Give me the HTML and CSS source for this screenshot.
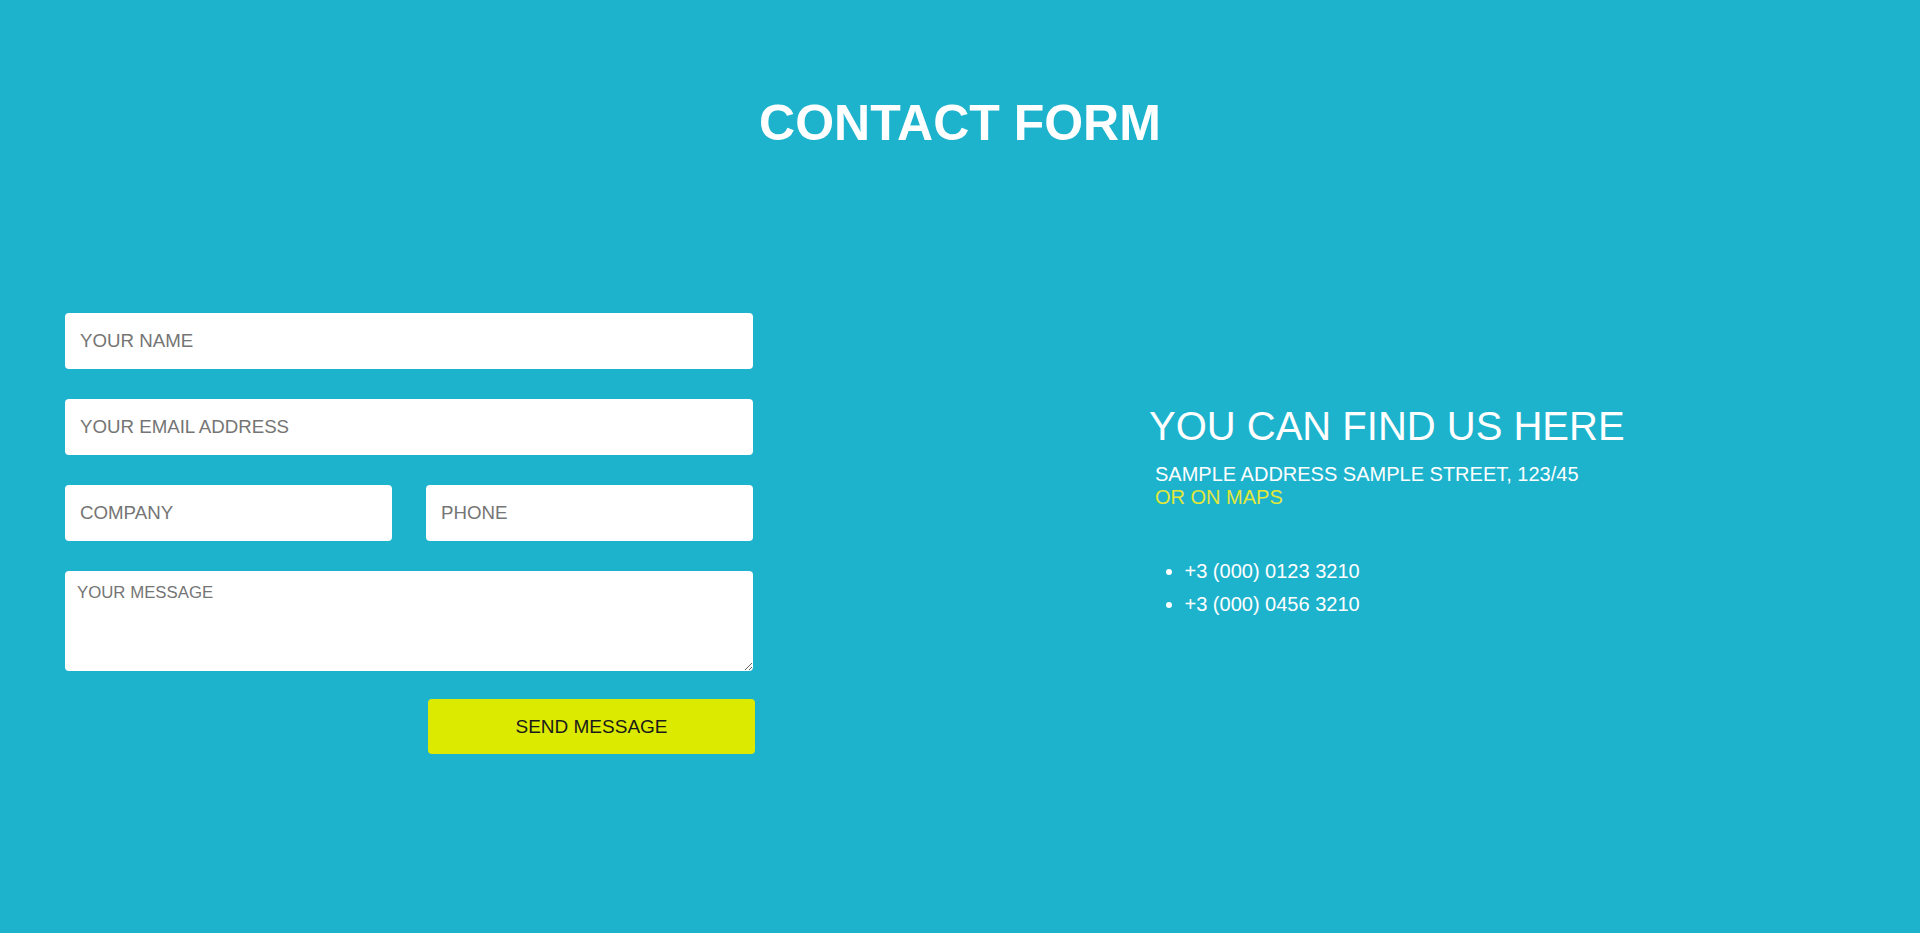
FILE: index.html
```html
<!DOCTYPE html>
<html lang="en">
<head>
<meta charset="utf-8">
<title>Contact Form</title>
<link rel="stylesheet" href="styles.css">
</head>
<body>
<section class="contact">
  <h1 class="contact-title">CONTACT FORM</h1>
  <div class="contact-body">
    <form class="contact-form">
      <input class="field" type="text" placeholder="YOUR NAME">
      <input class="field" type="email" placeholder="YOUR EMAIL ADDRESS">
      <div class="field-row">
        <input class="field" type="text" placeholder="COMPANY">
        <input class="field" type="text" placeholder="PHONE">
      </div>
      <textarea class="field field-message" placeholder="YOUR MESSAGE"></textarea>
      <div class="actions">
        <button class="send-btn" type="button">SEND MESSAGE</button>
      </div>
    </form>
    <div class="contact-info">
      <h2 class="info-title">YOU CAN FIND US HERE</h2>
      <p class="info-address">SAMPLE ADDRESS SAMPLE STREET, 123/45<br><a class="maps-link" href="#">OR ON MAPS</a></p>
      <ul class="phones">
        <li>+3 (000) 0123 3210</li>
        <li>+3 (000) 0456 3210</li>
      </ul>
    </div>
  </div>
</section>
</body>
</html>
```
FILE: styles.css
```css
html, body {
  margin: 0;
  padding: 0;
}
body {
  background: #1db3cd;
  font-family: "Liberation Sans", Arial, sans-serif;
  color: #ffffff;
  min-height: 933px;
}
.contact {
  padding: 95px 0 0;
}
.contact-title {
  margin: 0;
  text-align: center;
  font-size: 50px;
  font-weight: bold;
  line-height: 57.5px;
  color: #ffffff;
}
.contact-body {
  display: flex;
  align-items: flex-start;
  padding: 0 65px;
  margin-top: 160px;
}
.contact-form {
  width: 690px;
  display: flex;
  flex-direction: column;
}
.field {
  box-sizing: border-box;
  display: block;
  width: 688px;
  height: 56px;
  border: 0;
  border-radius: 4px;
  background: #ffffff;
  padding: 0 15px;
  margin: 0 0 30px;
  font-family: "Liberation Sans", Arial, sans-serif;
  font-size: 18.7px;
  color: #333;
  outline: none;
}
.field::placeholder {
  color: #757575;
}
.field-row {
  display: flex;
  gap: 34px;
  width: 688px;
}
.field-row .field {
  width: 327px;
}
.field-message {
  height: 100px;
  padding: 12px 12px;
  font-size: 16.8px;
  margin-bottom: 28px;
  resize: vertical;
}
.actions {
  display: flex;
  padding-left: 363px;
}
.send-btn {
  width: 327px;
  height: 55px;
  border: 0;
  border-radius: 4px;
  background: #dcea00;
  color: #1a1a1a;
  font-family: "Liberation Sans", Arial, sans-serif;
  font-size: 19px;
  padding: 2px 0 0;
  cursor: pointer;
}
.contact-info {
  margin-left: 394px;
  padding-top: 90px;
}
.info-title {
  margin: 0;
  font-size: 40px;
  font-weight: normal;
  line-height: 46px;
  color: #ffffff;
}
.info-address {
  margin: 14px 0 0;
  padding-left: 6px;
  font-size: 20px;
  line-height: 23px;
}
.maps-link {
  color: #e2e83a;
  text-decoration: none;
}
.phones {
  margin: 46.5px 0 0;
  padding-left: 35.5px;
  font-size: 20px;
  line-height: 33px;
}
```
